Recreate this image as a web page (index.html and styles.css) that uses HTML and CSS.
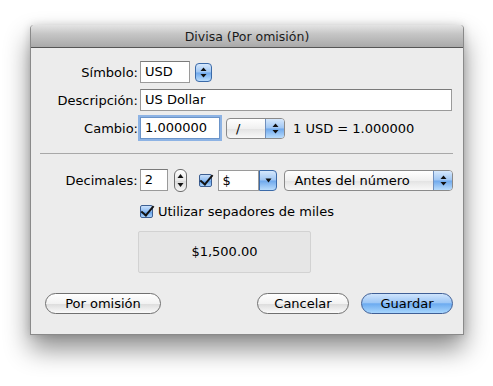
FILE: index.html
```html
<!doctype html>
<html lang="es">
<head>
  <meta charset="UTF-8">
  <title>Divisa</title>
  <link rel="stylesheet" href="styles.css">
</head>
<body>

<div class="window">
  <div class="titlebar">Divisa (Por omisión)</div>

  <div class="content">
    <div class="row">
      <span class="lbl">Símbolo:</span>
      <div class="field sym">USD</div>
      <div class="stepper blue">
        <svg width="7" height="11" viewBox="0 0 7 11"><path d="M3.5 0.5 L6.5 4 L0.5 4 Z M0.5 7 L6.5 7 L3.5 10.5 Z" fill="#111"/></svg>
      </div>
    </div>

    <div class="row">
      <span class="lbl">Descripción:</span>
      <div class="field desc">US Dollar</div>
    </div>

    <div class="row">
      <span class="lbl">Cambio:</span>
      <div class="field rate focus">1.000000</div>
      <div class="popup slash">
        <span class="popup-text">/</span>
        <span class="popup-arrows">
          <svg width="7" height="11" viewBox="0 0 7 11"><path d="M3.5 0.5 L6.5 4 L0.5 4 Z M0.5 7 L6.5 7 L3.5 10.5 Z" fill="#111"/></svg>
        </span>
      </div>
      <span class="note">1 USD = 1.000000</span>
    </div>

    <div class="sep"></div>

    <div class="row">
      <span class="lbl">Decimales:</span>
      <div class="field dec">2</div>
      <div class="stepper plain">
        <svg width="7" height="15" viewBox="0 0 7 15"><path d="M3.5 1 L6.5 5 L0.5 5 Z M0.5 10 L6.5 10 L3.5 14 Z" fill="#111"/></svg>
      </div>
      <span class="check"></span>
      <div class="combo">
        <span class="combo-text">$</span>
        <span class="combo-btn">
          <svg width="7" height="5" viewBox="0 0 7 5"><path d="M0.5 0.5 L6.5 0.5 L3.5 4.5 Z" fill="#111"/></svg>
        </span>
      </div>
      <div class="popup place">
        <span class="popup-text">Antes del número</span>
        <span class="popup-arrows">
          <svg width="7" height="11" viewBox="0 0 7 11"><path d="M3.5 0.5 L6.5 4 L0.5 4 Z M0.5 7 L6.5 7 L3.5 10.5 Z" fill="#111"/></svg>
        </span>
      </div>
    </div>

    <div class="row checkrow">
      <span class="check"></span>
      <span>Utilizar sepadores de miles</span>
    </div>

    <div class="preview">$1,500.00</div>

    <div class="buttons">
      <button class="btn">Por omisión</button>
      <span class="spacer"></span>
      <button class="btn">Cancelar</button>
      <button class="btn default">Guardar</button>
    </div>
  </div>
</div>

</body>
</html>
```

FILE: styles.css
```css
* {
    margin: 0;
    padding: 0;
    box-sizing: border-box;
}

html, body {
    height: 100%;
    background-color: #fff;
}

body {
    padding: 25px 30px 0 30px;
    font-family: "DejaVu Sans", sans-serif;
    font-size: 13px;
    color: #000;
}

.window {
    width: 434px;
    height: 310px;
    background-color: #ececec;
    border: 1px solid #8a8a8a;
    border-top: none;
    border-radius: 4px 4px 0 0;
    box-shadow: 0 14px 26px rgba(0, 0, 0, 0.45), 0 0 8px rgba(0, 0, 0, 0.15);
    overflow: hidden;
}

.titlebar {
    height: 23px;
    background: linear-gradient(#e4e4e4, #c6c6c6 40%, #a9a9a9);
    border-bottom: 1px solid #555;
    border-radius: 4px 4px 0 0;
    text-align: center;
    line-height: 23px;
    font-size: 12.5px;
    color: #1a1a1a;
}

.content {
    padding: 13px 10px 0 0;
}

.row {
    display: flex;
    align-items: center;
    height: 22px;
    margin-bottom: 6px;
}

.lbl {
    width: 107px;
    text-align: right;
    margin-right: 2px;
}

.field {
    height: 22px;
    background: #fff;
    border: 1px solid #9a9a9a;
    border-top-color: #7a7a7a;
    padding: 0 4px;
    line-height: 20px;
}

.field.sym {
    width: 50px;
}

.field.desc {
    width: 312px;
}

.field.rate {
    width: 80px;
}

.field.dec {
    width: 28px;
}

.field.focus {
    border-color: #6b94c9;
    box-shadow: 0 0 0 2px rgba(110, 160, 225, 0.75);
}

.stepper {
    display: flex;
    align-items: center;
    justify-content: center;
}

.stepper.blue {
    width: 17px;
    height: 19px;
    margin-left: 5px;
    border: 1px solid #3b6aa8;
    border-radius: 4px;
    background: linear-gradient(#d6e8fc, #9fc6f3 48%, #6ea8ec 52%, #b9dcfc);
}

.stepper.plain {
    width: 13px;
    height: 23px;
    margin-left: 6px;
    border: 1px solid #6e6e6e;
    border-radius: 6px;
    background: linear-gradient(#fff, #e8e8e8 50%, #dadada 52%, #f6f6f6);
}

.popup {
    height: 21px;
    display: flex;
    border: 1px solid #8a8a8a;
    border-radius: 4px;
    overflow: hidden;
    background: linear-gradient(#fff, #f0f0f0 50%, #e3e3e3 52%, #f8f8f8);
}

.popup-text {
    flex: 1;
    padding-left: 9px;
    line-height: 19px;
}

.popup-arrows {
    width: 19px;
    display: flex;
    align-items: center;
    justify-content: center;
    border-left: 1px solid #6f8fbd;
    background: linear-gradient(#d6e8fc, #9fc6f3 48%, #6ea8ec 52%, #b9dcfc);
}

.popup.slash {
    width: 59px;
    margin-left: 6px;
}

.popup.place {
    width: 169px;
    margin-left: 7px;
}

.note {
    margin-left: 8px;
}

.sep {
    height: 1px;
    background: #a8a8a8;
    margin: 14px 0 15px 9px;
}

.check {
    width: 13px;
    height: 13px;
    border: 1px solid #3d5f92;
    border-radius: 2px;
    background: linear-gradient(#c9e0fb, #8dbbf1 50%, #5e9ee9 52%, #a9d2fb);
    position: relative;
    margin-left: 12px;
}

.check::after {
    content: "";
    position: absolute;
    left: 3px;
    top: -3px;
    width: 5px;
    height: 11px;
    border-right: 2.5px solid #111;
    border-bottom: 2.5px solid #111;
    transform: rotate(40deg);
}

.combo {
    height: 21px;
    width: 60px;
    margin-left: 6px;
    display: flex;
}

.combo-text {
    flex: 1;
    background: #fff;
    border: 1px solid #9a9a9a;
    padding-left: 4px;
    line-height: 19px;
}

.combo-btn {
    width: 18px;
    display: flex;
    align-items: center;
    justify-content: center;
    border: 1px solid #3b6aa8;
    border-radius: 0 4px 4px 0;
    background: linear-gradient(#d6e8fc, #9fc6f3 48%, #6ea8ec 52%, #b9dcfc);
}

.checkrow {
    margin-top: 9px;
}

.checkrow .check {
    margin-left: 109px;
    margin-right: 5px;
}

.preview {
    width: 173px;
    height: 42px;
    margin: 9px 0 0 107px;
    border: 1px solid #d2d2d2;
    border-radius: 2px;
    background: #e6e6e6;
    text-align: center;
    line-height: 40px;
}

.buttons {
    display: flex;
    align-items: center;
    margin-top: 20px;
    padding-left: 14px;
}

.spacer {
    flex: 1;
}

.btn {
    height: 21px;
    border: 1px solid #707070;
    border-radius: 11px;
    background: linear-gradient(#fff, #f2f2f2 50%, #dedede 55%, #fafafa);
    font-family: "DejaVu Sans", sans-serif;
    font-size: 13px;
    color: #000;
    padding: 0;
}

.btn:first-child {
    width: 116px;
}

.btn + .btn {
    margin-left: 12px;
}

.buttons .btn:nth-child(3) {
    width: 92px;
}

.btn.default {
    width: 92px;
    border-color: #3f5f96;
    background: linear-gradient(#cfe4fc, #9dc7f6 45%, #6cabf0 52%, #a8d6fd);
}
```
